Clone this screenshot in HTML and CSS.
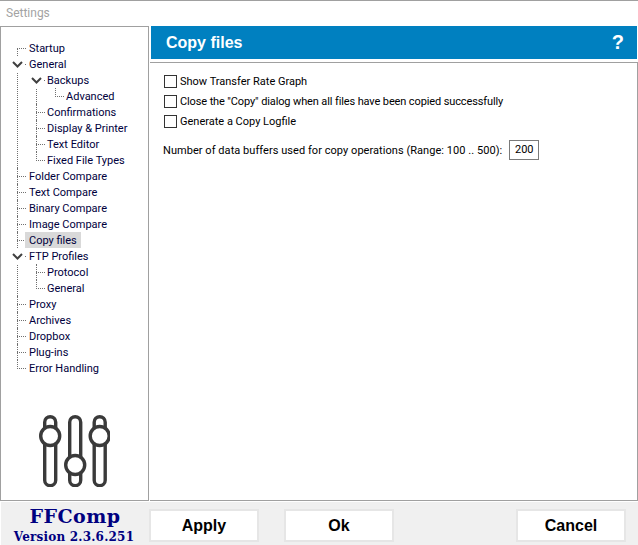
FILE: index.html
```html
<!DOCTYPE html>
<html lang="en">
<head>
<meta charset="utf-8">
<title>Settings</title>
<link rel="stylesheet" href="styles.css">
</head>
<body>
<div class="window">
  <div class="titlebar">Settings</div>
  <div class="main">
    <nav class="sidebar">
      <ul class="tree">
        <li><span class="label">Startup</span></li>
        <li><i class="toggle"><svg width="11" height="7" viewBox="0 0 11 7"><path d="M1 1l4.5 4.5L10 1" fill="none" stroke="#404040" stroke-width="2"/></svg></i><span class="label">General</span>
          <ul>
            <li><i class="toggle"><svg width="11" height="7" viewBox="0 0 11 7"><path d="M1 1l4.5 4.5L10 1" fill="none" stroke="#404040" stroke-width="2"/></svg></i><span class="label">Backups</span>
              <ul><li><span class="label">Advanced</span></li></ul>
            </li>
            <li><span class="label">Confirmations</span></li>
            <li><span class="label">Display &amp; Printer</span></li>
            <li><span class="label">Text Editor</span></li>
            <li><span class="label">Fixed File Types</span></li>
          </ul>
        </li>
        <li><span class="label">Folder Compare</span></li>
        <li><span class="label">Text Compare</span></li>
        <li><span class="label">Binary Compare</span></li>
        <li><span class="label">Image Compare</span></li>
        <li><span class="label selected">Copy files</span></li>
        <li><i class="toggle"><svg width="11" height="7" viewBox="0 0 11 7"><path d="M1 1l4.5 4.5L10 1" fill="none" stroke="#404040" stroke-width="2"/></svg></i><span class="label">FTP Profiles</span>
          <ul>
            <li><span class="label">Protocol</span></li>
            <li><span class="label">General</span></li>
          </ul>
        </li>
        <li><span class="label">Proxy</span></li>
        <li><span class="label">Archives</span></li>
        <li><span class="label">Dropbox</span></li>
        <li><span class="label">Plug-ins</span></li>
        <li><span class="label">Error Handling</span></li>
      </ul>
      <svg class="sliders" width="72" height="72" viewBox="0 0 72 72" fill="none" stroke="#3a3a3a" stroke-width="3.4">
        <rect x="6.7" y="1.7" width="11" height="69" rx="5.5" fill="#fff"/>
        <rect x="31.7" y="1.7" width="11" height="69" rx="5.5" fill="#fff"/>
        <rect x="56.2" y="1.7" width="11" height="69" rx="5.5" fill="#fff"/>
        <circle cx="12.2" cy="21" r="9.5" fill="#fff"/>
        <circle cx="37.2" cy="50" r="9.5" fill="#fff"/>
        <circle cx="61.7" cy="21" r="9.5" fill="#fff"/>
      </svg>
    </nav>
    <section class="content">
      <header class="heading">
        <h1>Copy files</h1>
        <span class="help">?</span>
      </header>
      <div class="panel">
        <label class="check"><input type="checkbox"><span>Show Transfer Rate Graph</span></label>
        <label class="check"><input type="checkbox"><span class="tight">Close the "Copy" dialog when all files have been copied successfully</span></label>
        <label class="check"><input type="checkbox"><span>Generate a Copy Logfile</span></label>
        <div class="buffers">
          <span class="wide">Number of data buffers used for copy operations (Range: 100 .. 500):</span>
          <span class="field">200</span>
        </div>
      </div>
    </section>
  </div>
  <footer class="footer">
    <div class="brand">
      <div class="brand-name">FFComp</div>
      <div class="brand-version">Version 2.3.6.251</div>
    </div>
    <div class="buttons">
      <div class="left-buttons">
        <button>Apply</button>
        <button>Ok</button>
      </div>
      <button>Cancel</button>
    </div>
  </footer>
</div>
</body>
</html>
```
FILE: styles.css
```css
* { box-sizing: border-box; }
html, body { margin: 0; padding: 0; }
body {
  width: 638px;
  height: 545px;
  overflow: hidden;
  background: #fff;
  font-family: Roboto, sans-serif;
  font-size: 11px;
  color: #000;
}
.window { display: flex; flex-direction: column; height: 545px; }
.titlebar {
  height: 26px;
  padding: 4px 0 0 6px;
  border-top: 1px solid #a0a0a0;
  color: #a3a3a3;
  font-size: 12px;
  line-height: 16px;
}
.main { display: flex; height: 475px; }
.sidebar {
  width: 149px;
  height: 475px;
  border: 1px solid #a0a0a0;
  display: flex;
  flex-direction: column;
  align-items: center;
  padding-top: 13px;
}
.tree, .tree ul { list-style: none; margin: 0; padding: 0; }
.tree { align-self: flex-start; margin-left: 16px; }
.tree ul { margin-left: 7px; }
.tree li { position: relative; padding-left: 12px; line-height: 15px; }
.tree li::before {
  content: "";
  position: absolute;
  left: 0;
  top: 8px;
  width: 9px;
  border-top: 1px dotted #707070;
}
.tree li::after {
  content: "";
  position: absolute;
  left: 0;
  top: 0;
  bottom: 0;
  border-left: 1px dotted #707070;
}
.tree > li:first-child::after { top: 8px; }
.tree li:last-child::after { bottom: auto; height: 9px; }
.label {
  display: block;
  height: 16px;
  width: max-content;
  margin-left: -4px;
  padding: 1px 4px 0;
  position: relative;
  z-index: 1;
  color: #00003c;
  white-space: nowrap;
}
.tree ul .label { margin-left: -5px; }
.selected { background: #d9d9d9; }
.toggle {
  position: absolute;
  z-index: 2;
  left: -6px;
  top: 0;
  width: 13px;
  height: 16px;
  background: #fff;
  display: flex;
  justify-content: center;
  padding-top: 5px;
}
.toggle svg { display: block; }
.sliders { margin-top: auto; margin-bottom: 13px; position: relative; left: -1px; }
.content { width: 489px; padding-left: 1px; display: flex; flex-direction: column; }
.heading {
  height: 33px;
  margin-left: 1px;
  background: #0080c0;
  display: flex;
  align-items: center;
  justify-content: space-between;
  padding: 0 13px 0 15px;
  color: #fff;
  margin-right: 1px;
}
.heading h1 {
  margin: 0;
  font: bold 16px "Liberation Sans", sans-serif;
}
.help { font: bold 20px "Liberation Sans", sans-serif; }
.panel {
  flex: 1;
  margin-top: 3px;
  border-top: 1px solid #a0a0a0;
  border-right: 1px solid #a0a0a0;
  border-bottom: 1px solid #a0a0a0;
  padding: 8px 0 0 13px;
}
.check { display: flex; align-items: center; height: 20px; gap: 3px; }
.check input {
  appearance: none;
  width: 13px;
  height: 13px;
  margin: 0 0 0 1px;
  border: 1px solid #333;
  background: #fff;
}
.tight { letter-spacing: -0.12px; }
.wide { letter-spacing: 0.05px; }
.buffers { display: flex; align-items: center; gap: 7px; margin-top: 9px; }
.field {
  width: 30px;
  height: 20px;
  border: 1px solid #7a7a7a;
  line-height: 18px;
  text-align: center;
}
.footer { flex: 1; background: #f0f0f0; display: flex; margin: 1px 0 0 1px; }
.brand {
  width: 148px;
  text-align: center;
  color: #000080;
  font-family: "DejaVu Serif", serif;
  font-weight: bold;
}
.brand-name { font-size: 19px; line-height: 22px; margin-top: 3px; letter-spacing: 0.5px; }
.brand-version { font-size: 12px; line-height: 15px; letter-spacing: 0.2px; margin: 3px 2px 0 0; }
.buttons {
  flex: 1;
  display: flex;
  justify-content: space-between;
  padding: 7px 12px 0 0;
}
.left-buttons { display: flex; gap: 25px; }
button {
  width: 110px;
  height: 33px;
  padding: 0;
  background: #fff;
  border: 2px solid #e6e6e6;
  font: bold 16px "Liberation Sans", sans-serif;
  color: #000;
}
```
